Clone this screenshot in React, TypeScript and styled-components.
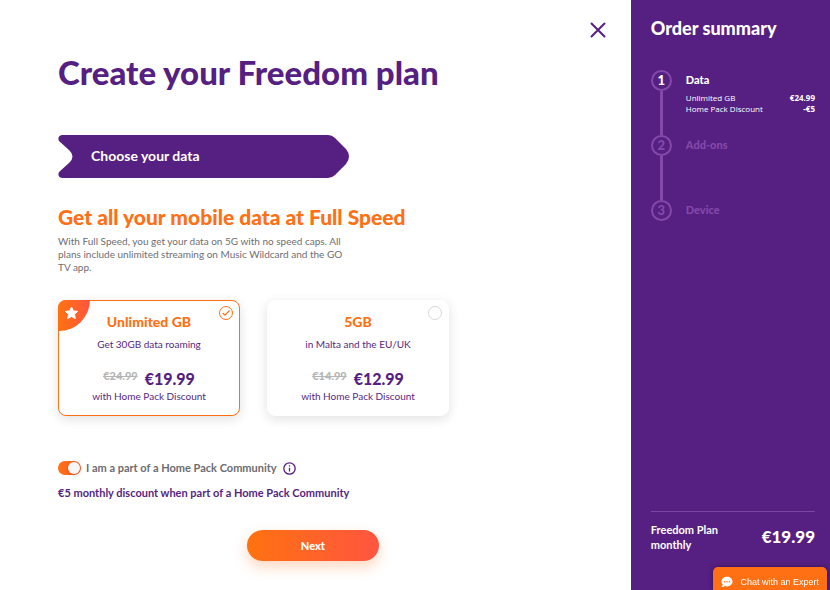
import React, { useState } from "react";
import styled, { createGlobalStyle } from "styled-components";

const purple = "#561f82";
const lilac = "#8449a8";
const orange = "#ff6f14";
const fire = "linear-gradient(90deg, #ff7210, #ff5540)";

const GlobalStyle = createGlobalStyle`
  * { box-sizing: border-box; }
  body {
    margin: 0;
    background: #fff;
    color: ${purple};
    font-family: Lato, "Open Sans", sans-serif;
  }
  h1, h2, h3, p, ol, dl, dd, fieldset { margin: 0; padding: 0; border: 0; }
  button, input { font: inherit; }
`;

const Page = styled.div`
  display: grid;
  grid-template-columns: minmax(0, 76fr) minmax(0, 24fr);
  min-height: 100vh;
`;

const Main = styled.main`
  display: flex;
  flex-direction: column;
  align-items: flex-start;
  padding: 20px 24px 28px 58px;
`;

const CloseButton = styled.button`
  display: flex;
  align-self: flex-end;
  padding: 0;
  border: 0;
  background: none;
  color: ${purple};
  cursor: pointer;
`;

const Title = styled.h1`
  margin-top: 12px;
  font-size: 33px;
  line-height: 40px;
  font-weight: 900;
`;

const Ribbon = styled.div`
  width: 292px;
  height: 43px;
  margin-top: 43px;
  padding-left: 33px;
  background: ${purple};
  clip-path: path("M4 0H270Q274 0 277 3L288 14Q294 21.500 288 29L277 40Q274 43 270 43H4Q-1 42 1 37L11 28Q18 21.500 11 15L1 6Q-1 1 4 0Z");
  color: #fff;
  font-size: 14px;
  line-height: 41px;
  font-weight: 700;
`;

const Heading = styled.h2`
  margin-top: 26px;
  color: ${orange};
  font-size: 21px;
  line-height: 26px;
  font-weight: 900;
`;

const Intro = styled.p`
  max-width: 290px;
  margin-top: 5px;
  color: #6e6e72;
  font-size: 10px;
  line-height: 13px;
`;

const Plans = styled.fieldset`
  display: grid;
  grid-template-columns: repeat(2, 182px);
  gap: 27px;
  margin-top: 26px;
`;

const PlanCard = styled.label<{ $selected: boolean }>`
  position: relative;
  display: flex;
  flex-direction: column;
  align-items: center;
  height: 116px;
  padding-top: 13px;
  border: 1px solid ${(p) => (p.$selected ? orange : "#fff")};
  border-radius: 8px;
  background: #fff;
  box-shadow: 0 3px 12px rgba(0, 0, 0, 0.12);
  cursor: pointer;
`;

const PlanRadio = styled.input`
  position: absolute;
  top: 5px;
  right: 6px;
  width: 14px;
  height: 14px;
  margin: 0;
  appearance: none;
  border: 1px solid #d8d8d8;
  border-radius: 50%;
  &:checked { border-color: ${orange}; }
`;

const RadioTick = styled.svg`
  position: absolute;
  top: 5px;
  right: 6px;
  pointer-events: none;
`;

const StarBadge = styled.span`
  position: absolute;
  top: -1px;
  left: -1px;
  width: 32px;
  height: 31px;
  padding: 6px 0 0 6px;
  border-radius: 8px 0 32px 0;
  background: ${fire};
  svg { display: block; }
`;

const PlanName = styled.span`
  margin-bottom: 7px;
  color: ${orange};
  font-size: 14px;
  line-height: 16px;
  font-weight: 900;
`;

const PlanNote = styled.span`
  font-size: 10px;
  line-height: 14px;
`;

const PriceRow = styled.span`
  display: flex;
  gap: 7px;
  margin-top: 18px;
  line-height: 20px;
  font-weight: 900;
`;

const OldPrice = styled.s`
  color: #b5b5b5;
  font-size: 11px;
  line-height: 14px;
`;

const Price = styled.span`
  font-size: 16px;
`;

const ToggleRow = styled.div`
  display: flex;
  align-items: center;
  margin-top: 44px;
  color: #6c6c70;
  font-size: 11px;
  line-height: 16px;
  font-weight: 700;
`;

const ToggleLabel = styled.label`
  display: flex;
  align-items: center;
  gap: 5px;
  cursor: pointer;
`;

const Toggle = styled.input`
  display: flex;
  align-items: center;
  width: 23px;
  height: 14px;
  margin: 0;
  padding: 0 1px;
  appearance: none;
  border-radius: 7px;
  background: #c4c4c4;
  cursor: pointer;
  &::before {
    content: "";
    width: 12px;
    height: 12px;
    border-radius: 50%;
    background: #f6f6f6;
    box-shadow: 0 1px 4px rgba(0, 0, 0, 0.2);
  }
  &:checked {
    justify-content: flex-end;
    background: linear-gradient(90deg, #ff7210, #ff5a30);
  }
`;

const InfoButton = styled.button`
  display: flex;
  margin-left: 6px;
  padding: 0;
  border: 0;
  background: none;
  color: ${purple};
  cursor: pointer;
`;

const Discount = styled.p`
  margin-top: 9px;
  font-size: 11px;
  line-height: 16px;
  font-weight: 700;
`;

const Actions = styled.div`
  display: flex;
  justify-content: center;
  width: 100%;
  margin-top: 29px;
  padding-right: 39px;
`;

const NextButton = styled.button`
  width: 132px;
  height: 31px;
  border: 0;
  border-radius: 16px;
  background: ${fire};
  box-shadow: 0 6px 14px rgba(255, 111, 20, 0.28);
  color: #fff;
  font-size: 11px;
  font-weight: 900;
  cursor: pointer;
`;

const Summary = styled.aside`
  display: flex;
  flex-direction: column;
  padding: 16px 15px 38px 20px;
  background: ${purple};
  color: #fff;
`;

const SummaryTitle = styled.h2`
  font-size: 18px;
  line-height: 24px;
  font-weight: 900;
`;

const Steps = styled.ol`
  margin-top: 30px;
  list-style: none;
`;

const Step = styled.li<{ $active?: boolean }>`
  display: grid;
  grid-template-columns: 21px minmax(0, 1fr);
  column-gap: 14px;
  min-height: 65px;
  color: ${(p) => (p.$active ? "#fff" : lilac)};
  &:last-child { min-height: 21px; }
`;

const Track = styled.div`
  display: flex;
  flex-direction: column;
  align-items: center;
`;

const StepNumber = styled.span`
  width: 21px;
  height: 21px;
  border: 2px solid ${lilac};
  border-radius: 50%;
  font-size: 13px;
  line-height: 17px;
  font-weight: 900;
  text-align: center;
`;

const Line = styled.span`
  flex: 1;
  width: 3px;
  background: ${lilac};
`;

const StepName = styled.h3`
  font-size: 11px;
  line-height: 20px;
  font-weight: 900;
`;

const Items = styled.dl`
  margin-top: 2px;
`;

const Item = styled.div`
  display: flex;
  justify-content: space-between;
  font-family: "Open Sans", sans-serif;
  font-size: 8px;
  line-height: 11px;
  white-space: nowrap;
  dd { font-weight: 700; }
`;

const Total = styled.div`
  display: flex;
  align-items: center;
  justify-content: space-between;
  margin-top: auto;
  padding-top: 10px;
  border-top: 1px solid #7b46a2;
  font-weight: 700;
`;

const TotalLabel = styled.span`
  max-width: 80px;
  font-size: 11px;
  line-height: 15px;
`;

const TotalPrice = styled.strong`
  font-size: 17px;
  line-height: 20px;
  font-weight: 900;
`;

const ChatButton = styled.button`
  position: fixed;
  right: 3px;
  bottom: 0;
  display: flex;
  align-items: center;
  gap: 7px;
  height: 23px;
  padding: 7px 8px 0;
  border: 0;
  border-radius: 5px 5px 0 0;
  background: ${orange};
  box-shadow: 0 0 5px rgba(0, 0, 0, 0.4);
  color: #fff;
  font-family: "Liberation Sans", Arial, sans-serif;
  font-size: 9px;
  line-height: 16px;
  white-space: nowrap;
  cursor: pointer;
`;

const plans = [
  { id: "unlimited", name: "Unlimited GB", note: "Get 30GB data roaming", old: "€24.99", price: "€19.99", featured: true },
  { id: "5gb", name: "5GB", note: "in Malta and the EU/UK", old: "€14.99", price: "€12.99", featured: false },
];

export default function App() {
  const [plan, setPlan] = useState("unlimited");
  const [member, setMember] = useState(true);

  return (
    <>
      <GlobalStyle />
      <Page>
        <Main>
          <CloseButton aria-label="Close">
            <svg width="18" height="20" viewBox="0 0 18 20" fill="none" stroke="currentColor" strokeWidth="2" strokeLinecap="round">
              <path d="M2.500 3.500 15.500 16.500M15.500 3.500 2.500 16.500" />
            </svg>
          </CloseButton>
          <Title>Create your Freedom plan</Title>
          <Ribbon>Choose your data</Ribbon>
          <Heading>Get all your mobile data at Full Speed</Heading>
          <Intro>
            With Full Speed, you get your data on 5G with no speed caps. All plans include unlimited streaming on Music
            Wildcard and the GO TV app.
          </Intro>
          <Plans aria-label="Data plan">
            {plans.map((p) => (
              <PlanCard key={p.id} $selected={plan === p.id}>
                {p.featured && (
                  <StarBadge>
                    <svg width="15" height="14" viewBox="0 0 15 14" fill="#fff" stroke="#fff" strokeWidth="1" strokeLinejoin="round">
                      <path d="M7.500 1 9.300 4.900 13.600 5.400 10.500 8.300 11.300 12.600 7.500 10.500 3.700 12.600 4.500 8.300 1.400 5.400 5.700 4.900Z" />
                    </svg>
                  </StarBadge>
                )}
                <PlanRadio type="radio" name="plan" checked={plan === p.id} onChange={() => setPlan(p.id)} />
                {plan === p.id && (
                  <RadioTick width="14" height="14" viewBox="0 0 14 14" fill="none" stroke={orange} strokeWidth="1.200" strokeLinecap="round">
                    <path d="M4 7.300 6 9.200 10.200 4.800" />
                  </RadioTick>
                )}
                <PlanName>{p.name}</PlanName>
                <PlanNote>{p.note}</PlanNote>
                <PriceRow>
                  <OldPrice>{p.old}</OldPrice>
                  <Price>{p.price}</Price>
                </PriceRow>
                <PlanNote>with Home Pack Discount</PlanNote>
              </PlanCard>
            ))}
          </Plans>
          <ToggleRow>
            <ToggleLabel>
              <Toggle type="checkbox" role="switch" checked={member} onChange={(e) => setMember(e.target.checked)} />
              I am a part of a Home Pack Community
            </ToggleLabel>
            <InfoButton aria-label="About the Home Pack Community">
              <svg width="13" height="13" viewBox="0 0 13 13" fill="none" stroke="currentColor" strokeWidth="1.300">
                <circle cx="6.500" cy="6.500" r="5.700" />
                <path d="M6.500 5.700V9.500M6.500 3.300V4.600" />
              </svg>
            </InfoButton>
          </ToggleRow>
          <Discount>€5 monthly discount when part of a Home Pack Community</Discount>
          <Actions>
            <NextButton>Next</NextButton>
          </Actions>
        </Main>
        <Summary>
          <SummaryTitle>Order summary</SummaryTitle>
          <Steps>
            <Step $active>
              <Track>
                <StepNumber>1</StepNumber>
                <Line />
              </Track>
              <div>
                <StepName>Data</StepName>
                <Items>
                  <Item>
                    <dt>Unlimited GB</dt>
                    <dd>€24.99</dd>
                  </Item>
                  <Item>
                    <dt>Home Pack Discount</dt>
                    <dd>-€5</dd>
                  </Item>
                </Items>
              </div>
            </Step>
            <Step>
              <Track>
                <StepNumber>2</StepNumber>
                <Line />
              </Track>
              <StepName>Add-ons</StepName>
            </Step>
            <Step>
              <Track>
                <StepNumber>3</StepNumber>
              </Track>
              <StepName>Device</StepName>
            </Step>
          </Steps>
          <Total>
            <TotalLabel>Freedom Plan monthly</TotalLabel>
            <TotalPrice>€19.99</TotalPrice>
          </Total>
        </Summary>
      </Page>
      <ChatButton>
        <svg width="12" height="12" viewBox="0 0 12 12">
          <path fill="#fff" d="M6 .8C2.900.8.500 2.900.500 5.600c0 1.200.5 2.200 1.200 3C1.600 9.700.9 10.400.4 11c1.400.1 2.600-.3 3.400-.9.700.2 1.400.3 2.200.3 3.100 0 5.500-2.100 5.500-4.800S9.100.8 6 .8Z" />
          <g fill={orange}>
            <circle cx="3.600" cy="5.700" r=".8" />
            <circle cx="6" cy="5.700" r=".8" />
            <circle cx="8.400" cy="5.700" r=".8" />
          </g>
        </svg>
        Chat with an Expert
      </ChatButton>
    </>
  );
}
